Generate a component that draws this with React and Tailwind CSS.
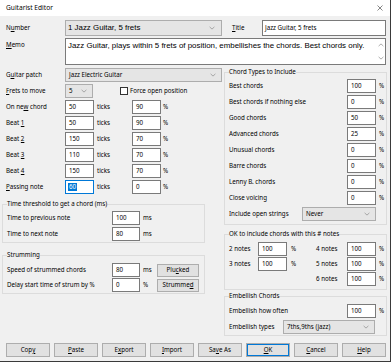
import React from 'react';

// Small combobox chevron used by every drop-down
const Chevron = ({ up }) => (
    <svg width="6" height="4" viewBox="0 0 6 4" className="shrink-0">
        <path d={up ? 'M0.6 3.1 3 0.9 5.4 3.1' : 'M0.6 0.9 3 3.1 5.4 0.9'} fill="none" stroke="#8a8a8a" strokeWidth="0.7" />
    </svg>
);

const Select = ({ value, className = '' }) => (
    <div className={`flex items-center justify-between h-[14px] bg-[#e5e5e5] border border-[#adadad] pl-[3px] pr-[5px] ${className}`}>
        <span className="whitespace-nowrap">{value}</span>
        <Chevron />
    </div>
);

const Field = ({ value, className = 'w-[29px]', active }) => (
    <div className={`flex items-center h-[14px] bg-white border pl-[2px] shrink-0 ${active ? 'border-[#0078d7]' : 'border-[#7a7a7a]'} ${className}`}>
        {active ? <span className="bg-[#0078d7] text-white px-[1px] py-[1px]">{value}</span> : <span className="pl-[1px]">{value}</span>}
    </div>
);

const Btn = ({ children, className = '' }) => (
    <div className={`flex items-center justify-center bg-[#e1e1e1] border border-[#adadad] ${className}`}>{children}</div>
);

const Group = ({ title, className = '', children }) => (
    <fieldset className={`border border-[#dcdcdc] pl-[4px] pr-[3px] ${className}`}>
        <legend className="h-[8px] leading-[8px]">{title}</legend>
        {children}
    </fieldset>
);

const beats = [
    [<>On ne<u>w</u> chord</>, '50', '90'],
    [<>Beat <u>1</u></>, '50', '90'],
    [<>Beat <u>2</u></>, '150', '70'],
    [<>Beat <u>3</u></>, '110', '70'],
    [<>Beat <u>4</u></>, '150', '70'],
];

const chordTypes = [
    ['Best chords', '100'],
    ['Best chords if nothing else', '0'],
    ['Good chords', '50'],
    ['Advanced chords', '25'],
    ['Unusual chords', '0'],
    ['Barre chords', '0'],
    ['Lenny B. chords', '0'],
    ['Close voicing', '0'],
];

const buttons = [
    <>Cop<u>y</u></>, <><u>P</u>aste</>, <>E<u>x</u>port</>, <><u>I</u>mport</>,
    <>Sa<u>v</u>e As</>, <><u>O</u>K</>, <><u>C</u>ancel</>, <><u>H</u>elp</>,
];

export default function App() {
    return (
        <div className="w-[391px] h-[362px] bg-[#f0f0f0] border-r border-b border-[#3a3a3a] font-['Noto_Sans',sans-serif] text-[6.2px] leading-none text-black overflow-hidden">
            {/* Title bar */}
            <div className="h-[16px] bg-white flex items-center justify-between pl-[6px] pr-[7px]">
                <span className="text-[6.6px]">Guitarist Editor</span>
                <svg width="6" height="6" viewBox="0 0 6 6">
                    <path d="M0.5 0.5 5.5 5.5 M5.5 0.5 0.5 5.5" stroke="#333" strokeWidth="0.6" />
                </svg>
            </div>

            <div className="pl-[2px] pt-[4px]">
                {/* Number / Title */}
                <div className="flex items-center h-[16px] pl-[4px]">
                    <span className="w-[59px]">N<u>u</u>mber</span>
                    <div className="flex items-center justify-between w-[157px] h-[16px] bg-[#e5e5e5] border border-[#adadad] pl-[2px] pr-[6px] font-['Liberation_Sans',sans-serif] text-[7.9px]">
                        <span>1 Jazz Guitar, 5 frets</span>
                        <Chevron />
                    </div>
                    <span className="ml-[10px] w-[30px]"><u>T</u>itle</span>
                    <div className="flex items-center w-[124px] h-[16px] bg-white border border-[#7a7a7a] pl-[2px]">Jazz Guitar, 5 frets</div>
                </div>

                {/* Memo */}
                <div className="flex items-start h-[27px] mt-[2px] pl-[4px]">
                    <span className="w-[59px] pt-[4px]"><u>M</u>emo</span>
                    <div className="flex w-[321px] h-[27px] bg-white border border-[#7a7a7a]">
                        <div className="flex-1 pl-[2px] pt-[3px] whitespace-nowrap font-['Liberation_Sans',sans-serif] text-[7.9px]">
                            Jazz Guitar, plays within 5 frets of position, embellishes the chords. Best chords only.
                        </div>
                        <div className="w-[9px] flex flex-col items-center justify-between py-[4px]">
                            <Chevron up />
                            <Chevron />
                        </div>
                    </div>
                </div>

                <div className="flex gap-[2px] mt-[3px]">
                    {/* Left column */}
                    <div className="flex flex-col w-[220px]">
                        <div className="flex flex-col gap-[2px]">
                            <div className="flex items-center h-[14px] pl-[4px]">
                                <span className="w-[59px]">G<u>u</u>itar patch</span>
                                <Select value="Jazz Electric Guitar" className="w-[157px]" />
                            </div>
                            <div className="flex items-center h-[14px] pl-[4px]">
                                <span className="w-[59px]"><u>F</u>rets to move</span>
                                <Select value="5" className="w-[28px]" />
                                <div className="ml-[27px] w-[8px] h-[8px] bg-white border border-[#333]" />
                                <span className="ml-[2px]">Force open position</span>
                            </div>
                            {beats.map(([label, a, b], i) => (
                                <div key={i} className="flex items-center h-[14px] pl-[4px]">
                                    <span className="w-[59px]">{label}</span>
                                    <Field value={a} />
                                    <span className="w-[38px] pl-[3px]">ticks</span>
                                    <Field value={b} />
                                    <span className="ml-[2px]">%</span>
                                </div>
                            ))}
                            <div className="flex items-center h-[14px] pl-[4px]">
                                <span className="w-[59px]"><u>P</u>assing note</span>
                                <Field value="60" active />
                                <span className="w-[38px] pl-[3px]">ticks</span>
                                <Field value="0" />
                                <span className="ml-[2px]">%</span>
                            </div>
                        </div>

                        <Group title="Time threshold to get a chord (ms)" className="w-[203px] mt-[6px] pt-[3px] pb-[1px]">
                            <div className="flex flex-col gap-[2px]">
                                <div className="flex items-center h-[14px]">
                                    <span className="w-[105px]">Time to previous note</span>
                                    <Field value="100" className="w-[28px]" />
                                    <span className="ml-[3px]">ms</span>
                                </div>
                                <div className="flex items-center h-[14px]">
                                    <span className="w-[105px]">Time to next note</span>
                                    <Field value="80" className="w-[28px]" />
                                    <span className="ml-[3px]">ms</span>
                                </div>
                            </div>
                        </Group>

                        <Group title="Strumming" className="w-[203px] mt-[8px] pt-[4px] pb-[1px]">
                            <div className="flex flex-col gap-[1px]">
                                <div className="flex items-center h-[14px]">
                                    <span className="w-[105px]">Speed of strummed chords</span>
                                    <Field value="80" className="w-[28px]" />
                                    <span className="w-[17px] pl-[3px]">ms</span>
                                    <Btn className="w-[42px] h-[13px]">Plu<u>c</u>ked</Btn>
                                </div>
                                <div className="flex items-center h-[14px]">
                                    <span className="w-[105px]">Delay start time of strum by %</span>
                                    <Field value="0" className="w-[28px]" />
                                    <span className="w-[17px] pl-[3px]">%</span>
                                    <Btn className="w-[42px] h-[13px]">Strumme<u>d</u></Btn>
                                </div>
                            </div>
                        </Group>
                    </div>

                    {/* Right column */}
                    <div className="flex flex-col w-[163px]">
                        <Group title="Chord Types to Include" className="pt-[3px] pb-[3px]">
                            <div className="flex flex-col gap-[2px]">
                                {chordTypes.map(([label, v]) => (
                                    <div key={label} className="flex items-center h-[14px]">
                                        <span className="flex-1">{label}</span>
                                        <Field value={v} />
                                        <span className="w-[7px] pl-[3px]">%</span>
                                    </div>
                                ))}
                                <div className="flex items-center h-[14px]">
                                    <span className="flex-1">Include open strings</span>
                                    <Select value="Never" className="w-[74px] mr-[7px]" />
                                </div>
                            </div>
                        </Group>

                        <Group title="OK to include chords with this # notes" className="mt-[5px] pt-[4px] pb-[3px]">
                            <div className="grid grid-cols-[87px_1fr] gap-y-[1px]">
                                {[['2 notes', '4 notes'], ['3 notes', '5 notes'], [null, '6 notes']].map(([l, r]) => (
                                    <React.Fragment key={r}>
                                        <div className="flex items-center h-[14px]">
                                            {l && (
                                                <>
                                                    <span className="w-[29px]">{l}</span>
                                                    <Field value="100" />
                                                    <span className="pl-[4px]">%</span>
                                                </>
                                            )}
                                        </div>
                                        <div className="flex items-center h-[14px]">
                                            <span className="flex-1">{r}</span>
                                            <Field value="100" />
                                            <span className="w-[7px] pl-[3px]">%</span>
                                        </div>
                                    </React.Fragment>
                                ))}
                            </div>
                        </Group>

                        <Group title="Embellish Chords" className="mt-[2px] pt-[4px] pb-[1px]">
                            <div className="flex flex-col gap-[2px]">
                                <div className="flex items-center h-[14px]">
                                    <span className="flex-1">Embellish how often</span>
                                    <Field value="100" />
                                    <span className="w-[7px] pl-[3px]">%</span>
                                </div>
                                <div className="flex items-center h-[14px]">
                                    <span className="w-[54px]">Embellish types</span>
                                    <Select value="7ths,9ths (jazz)" className="w-[92px]" />
                                </div>
                            </div>
                        </Group>
                    </div>
                </div>

                {/* Button row */}
                <div className="flex gap-[4px] mt-[7px] pl-[4px]">
                    {buttons.map((b, i) => (
                        <Btn
                            key={i}
                            className={`w-[44px] h-[14px] ${i === 5 ? 'border-[#0078d7] shadow-[inset_0_0_0_1px_#0078d7]' : ''}`}
                        >
                            {b}
                        </Btn>
                    ))}
                </div>
            </div>
        </div>
    );
}
